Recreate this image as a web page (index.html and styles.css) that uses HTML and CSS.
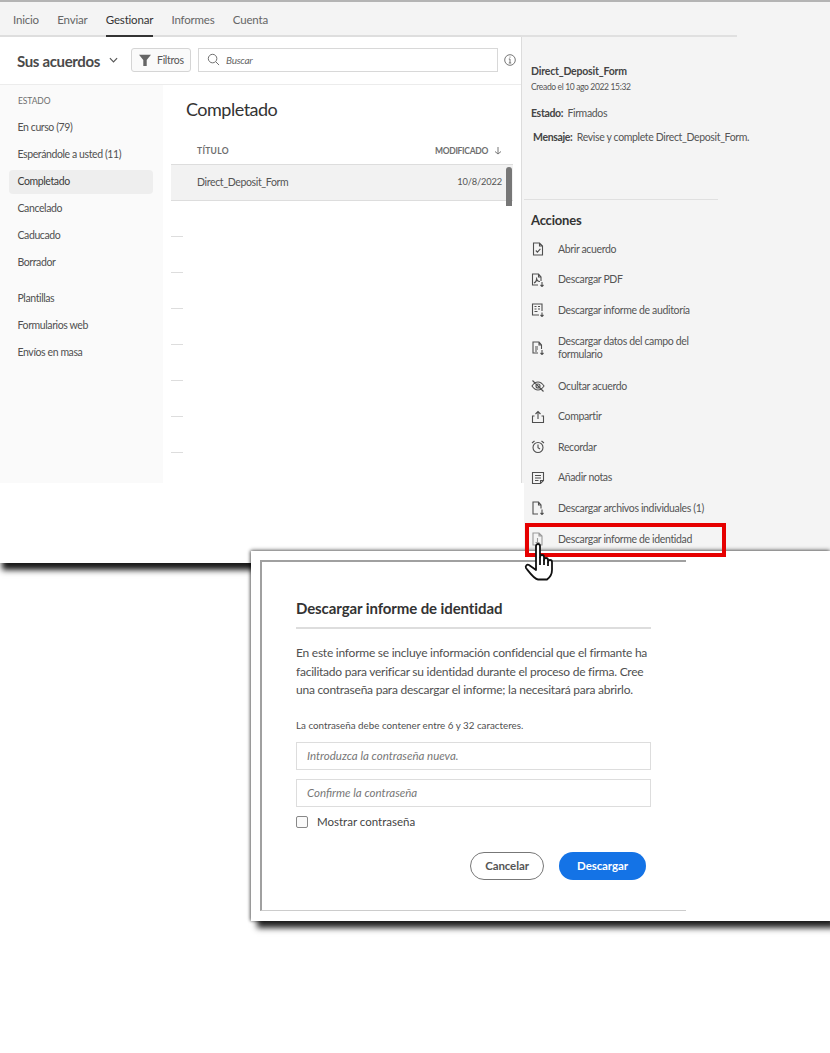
FILE: index.html
```html
<!DOCTYPE html>
<html lang="es">
<head>
<meta charset="utf-8">
<title>Descargar informe de identidad</title>
<link rel="stylesheet" href="styles.css">
</head>
<body>
<div class="canvas">
  <div class="window">
    <div class="left">
      <nav class="tabs">
        <a>Inicio</a><a>Enviar</a><a class="on">Gestionar</a><a>Informes</a><a>Cuenta</a>
      </nav>
      <div class="toolbar">
        <h1 class="agreements">Sus acuerdos</h1>
        <svg class="chev" viewBox="0 0 10 6"><path d="M1 1l4 4 4-4"/></svg>
        <button class="filter"><svg viewBox="0 0 14 14"><path d="M0 1h14L9 7v7H5V7z"/></svg>Filtros</button>
        <div class="search">
          <svg viewBox="0 0 14 14"><circle cx="6" cy="6" r="4.6"/><path d="M9.5 9.5L13 13"/></svg>
          <span>Buscar</span>
        </div>
        <svg class="info" viewBox="0 0 12 12"><circle cx="6" cy="6" r="5.3"/><path d="M6 5v4M4.8 9h2.4M4.8 5H6M6 2.6v1"/></svg>
      </div>
      <div class="body">
        <aside class="side">
          <div class="side-head">ESTADO</div>
          <a>En curso (79)</a>
          <a>Esperándole a usted (11)</a>
          <a class="sel">Completado</a>
          <a>Cancelado</a>
          <a>Caducado</a>
          <a>Borrador</a>
          <div class="side-gap"></div>
          <a>Plantillas</a>
          <a>Formularios web</a>
          <a>Envíos en masa</a>
        </aside>
        <main class="content">
          <h2>Completado</h2>
          <div class="thead"><span>TÍTULO</span><span class="mod">MODIFICADO<svg viewBox="0 0 8 8"><path d="M4 0v7M1 4.5L4 7l3-2.5"/></svg></span></div>
          <div class="row"><span class="row-name">Direct_Deposit_Form</span><span class="row-date">10/8/2022</span><i class="thumb"></i></div>
          <div class="dashes"><i></i><i></i><i></i><i></i><i></i><i></i><i></i></div>
        </main>
      </div>
    </div>
    <section class="panel">
      <div class="panel-rule"></div>
      <div class="doc-name">Direct_Deposit_Form</div>
      <div class="doc-date">Creado el 10 ago 2022 15:32</div>
      <div class="meta"><b>Estado:</b> Firmados</div>
      <div class="meta msg"><b>Mensaje:</b> Revise y complete Direct_Deposit_Form.</div>
      <div class="panel-sep"></div>
      <h3>Acciones</h3>
      <ul class="actions">
        <li><svg viewBox="0 0 14 14"><path d="M2.5 1h6l3 3v9h-9zM8.5 1v3h3M4.8 8.5l1.600 1.600 3-3.200"/></svg>Abrir acuerdo</li>
        <li><svg viewBox="0 0 14 14"><path d="M10 8V4L7.500 1H1.500v11H7M7.500 1v3H10M3 10c2-1 3-3 2.500-5.500C5.500 7 7 8.500 9 8.500M11 9v4.500M9.500 12l1.500 1.500 1.500-1.500"/></svg>Descargar PDF</li>
        <li><svg viewBox="0 0 14 14"><path d="M11 8V1H1.500v11H8M3.500 3.500h2M7 3.500h2M3.500 6h2M7 6h2M3.500 8.500h3M11 9.500v4M9.500 12l1.500 1.500 1.500-1.500"/></svg>Descargar informe de auditoría</li>
        <li class="tall"><svg viewBox="0 0 14 14"><path d="M10.500 8V4L8 1H2v11h5M8 1v3h2.500M4 6h3M4 8h3M4 10h2M11 9v4.500M9.500 12l1.500 1.500 1.500-1.500"/></svg><span>Descargar datos del campo del formulario</span></li>
        <li><svg viewBox="0 0 14 14"><path d="M1 7c2-3 4-4 6-4s4 1 6 4c-2 3-4 4-6 4s-4-1-6-4zM1.500 1.500l11 11"/><circle cx="7" cy="7" r="2"/></svg>Ocultar acuerdo</li>
        <li><svg viewBox="0 0 14 14"><path d="M3.500 6H1.500v6.500h11V6h-2M7 9V1.500M4.500 4L7 1.500 9.500 4"/></svg>Compartir</li>
        <li><svg viewBox="0 0 14 14"><circle cx="7" cy="7.500" r="5"/><path d="M7 4.500v3.200l2 1.300M1 3l2.500-2M13 3l-2.500-2"/></svg>Recordar</li>
        <li><svg viewBox="0 0 14 14"><path d="M1.500 1.500h11v8l-3 3h-8zM4 4.500h6M4 7h6M4 9.500h3.500M12.500 9.500h-3v3"/></svg>Añadir notas</li>
        <li><svg viewBox="0 0 14 14"><path d="M10 7.500V4L7.500 1H2v12h5M7.500 1v3H10M11 8.500v5M9.500 12l1.500 1.500 1.500-1.500"/></svg>Descargar archivos individuales (1)</li>
        <li class="flagged">
          <svg class="faint" viewBox="0 0 14 14"><path d="M2 1h6l3 3v9H2zM8 1v3h3M4.500 10.500h4M6.500 6v4.500"/></svg>Descargar informe de identidad
          <i class="redbox"></i>
          <svg class="hand" viewBox="0 0 30 38"><path d="M12 3a2 2 0 0 1 4 0v11a2 2 0 0 1 4 0v3a2 2 0 0 1 4 0v2a2 2 0 0 1 4 0v8c0 5-3 8-5 9.500H14C10 36 6 30 2 25c-1-2 1-4 3-3l7 5z"/><path d="M16 14v8M20 17v5M24 19v4"/></svg>
        </li>
      </ul>
    </section>
  </div>

  <div class="dialog">
    <div class="frame">
      <h2>Descargar informe de identidad</h2>
      <p class="lead">En este informe se incluye información confidencial que el firmante ha facilitado para verificar su identidad durante el proceso de firma. Cree una contraseña para descargar el informe; la necesitará para abrirlo.</p>
      <p class="note">La contraseña debe contener entre 6 y 32 caracteres.</p>
      <div class="field">Introduzca la contraseña nueva.</div>
      <div class="field">Confirme la contraseña</div>
      <label class="check"><i></i>Mostrar contraseña</label>
      <div class="buttons">
        <button class="cancel">Cancelar</button>
        <button class="go">Descargar</button>
      </div>
    </div>
  </div>
</div>
</body>
</html>
```

FILE: styles.css
```css
* { box-sizing: border-box; }
html, body { margin: 0; padding: 0; background: #fff; }
body { font-family: "Lato", "Open Sans", sans-serif; color: #4b4b4b; }
h1, h2, h3, p, ul { margin: 0; padding: 0; }
.canvas { position: relative; width: 830px; height: 1053px; overflow: hidden; background: #fff; }

.window { display: flex; width: 830px; height: 563px; background: #fff; border-top: 2px solid #b4b4b4; box-shadow: 2px 7px 6px rgba(0,0,0,.9); }

.left { width: 521px; display: flex; flex-direction: column; height: 100%; }
.tabs { display: flex; gap: 18.400px; height: 35px; padding-left: 13px; background: #f4f4f4; border-bottom: 2px solid #dedede; font-size: 11.500px; letter-spacing: -.2px; }
.tabs a { height: 35px; line-height: 36px; color: #666; }
.tabs .on { color: #333; border-bottom: 2px solid #333; }

.toolbar { display: flex; align-items: center; height: 48px; padding: 0 0 2px 17px; border-bottom: 1px solid #ececec; }
.agreements { font-size: 15px; font-weight: 700; color: #4a4a4a; letter-spacing: -.35px; margin-top: 2px; }
.chev { width: 9px; height: 6px; margin-left: 9px; fill: none; stroke: #555; stroke-width: 1.300; }
.filter { display: flex; align-items: center; gap: 6px; width: 60px; height: 24px; margin-left: 13px; padding: 0 0 0 7px; background: #fafafa; border: 1px solid #d5d5d5; border-radius: 3px; font: 10.500px "Lato", sans-serif; letter-spacing: -.3px; color: #555; }
.filter svg { width: 12px; height: 12px; fill: #666; }
.search { display: flex; align-items: center; gap: 6px; width: 300px; height: 24px; margin-left: 7px; padding-left: 8px; border: 1px solid #d8d8d8; font-size: 10px; font-style: italic; letter-spacing: -.3px; color: #666; }
.search svg { width: 13px; height: 13px; fill: none; stroke: #666; stroke-width: 1; }
.info { width: 12px; height: 12px; margin-left: 6px; fill: none; stroke: #666; stroke-width: .9; }

.body { flex: 1; display: flex; }
.side { width: 163px; height: 398px; padding: 0 10px 0 9px; background: #fafafa; display: flex; flex-direction: column; }
.side-head { height: 30px; padding: 10px 0 0 9px; font-size: 8.500px; line-height: 12px; letter-spacing: -.1px; color: #6e6e6e; }
.side a { display: block; height: 27px; line-height: 24px; padding-left: 8.500px; font-size: 10.500px; letter-spacing: -.4px; color: #505050; }
.side .sel { height: 24px; margin: 1px 0 2px; line-height: 22px; background: #eee; border-radius: 4px; color: #3c3c3c; }
.side-gap { height: 9px; }

.content { flex: 1; padding-left: 8px; }
.content h2 { height: 53px; padding: 12px 0 0 15px; font-size: 18px; line-height: 24px; font-weight: 400; letter-spacing: -.5px; color: #333; }
.thead { display: flex; justify-content: space-between; align-items: center; width: 342px; height: 26px; padding: 0 11px 0 26px; font-size: 8.500px; font-weight: 700; letter-spacing: .3px; color: #6e6e6e; }
.mod { display: flex; align-items: center; gap: 6px; letter-spacing: -.3px; }
.mod svg { width: 8px; height: 8px; fill: none; stroke: #777; stroke-width: 1; }
.row { position: relative; display: flex; justify-content: space-between; align-items: center; width: 342px; height: 37px; padding: 0 11px 2px 26px; background: #f2f2f2; border-top: 1px solid #ddd; border-bottom: 1px solid #ddd; font-size: 10.500px; color: #555; }
.row-name { letter-spacing: -.35px; }
.row-date { font-size: 9.300px; letter-spacing: -.15px; }
.thumb { position: absolute; top: 2px; right: 1px; width: 6px; height: 39px; border-radius: 3px 3px 0 0; background: #777; }
.dashes { display: flex; flex-direction: column; gap: 35px; padding-top: 35px; }
.dashes i { display: block; width: 12px; height: 1px; background: #ddd; }

.panel { position: relative; width: 309px; height: 100%; padding-left: 10px; background: #f4f4f4; }
.panel::before { content: ""; position: absolute; left: 0; top: 35px; height: 446px; width: 1px; background: #dcdcdc; }
.panel::after { content: ""; position: absolute; left: 0; top: 481px; bottom: 0; width: 3px; background: #fff; }
.panel-rule { width: 216px; height: 35px; margin-left: -10px; border-bottom: 2px solid #e0e0e0; }
.doc-name { margin-top: 27px; font-size: 10.500px; line-height: 14px; font-weight: 700; letter-spacing: -.2px; color: #444; }
.doc-date { margin-top: 3px; font-size: 8.500px; line-height: 12px; letter-spacing: -.35px; color: #555; }
.meta { margin-top: 13px; font-size: 10.500px; line-height: 14px; letter-spacing: -.35px; color: #555; }
.meta b { margin-right: 2px; color: #444; }
.msg { margin: 10px 0 0 2px; }
.panel-sep { width: 194px; height: 1px; margin: 55px 0 0 -7px; background: #e0e0e0; }
.panel h3 { margin-top: 13px; font-size: 13px; line-height: 14px; font-weight: 700; letter-spacing: -.2px; color: #333; }
.actions { list-style: none; margin-top: 7px; width: 199px; }
.actions li { display: flex; align-items: center; min-height: 30.600px; font-size: 10.500px; line-height: 13px; letter-spacing: -.35px; color: #555; white-space: nowrap; }
.actions li.tall { min-height: 45px; white-space: normal; }
.actions li > svg:first-child { flex: none; width: 14px; height: 14px; margin-right: 13px; fill: none; stroke: #4f4f4f; stroke-width: 1.100; }
.actions li > svg.faint { stroke: #999; }
.flagged { position: relative; }
.redbox { position: absolute; left: -6px; top: -1px; width: 201px; height: 34px; border: 4px solid #e60000; z-index: 2; }
.hand { position: absolute; left: -7px; top: 19px; width: 30px; height: 38px; fill: #fff; stroke: #111; stroke-width: 1.800; stroke-linejoin: round; z-index: 3; }

.dialog { position: absolute; z-index: 1; left: 251px; top: 551px; width: 579px; height: 370px; padding: 9px; background: #fff; box-shadow: 0 -1px 4px rgba(0,0,0,.45), 6px 7px 6px rgba(0,0,0,.85), -1px 0 3px rgba(0,0,0,.4); }
.frame { width: 426px; height: 351px; padding: 36px 35px 0 34px; border-top: 2px solid #a0a0a0; border-left: 2px solid #a0a0a0; border-bottom: 1px solid #ccc; }
.frame h2 { height: 31px; padding-bottom: 10px; font-size: 15px; line-height: 20px; font-weight: 700; letter-spacing: -.1px; color: #333; border-bottom: 2px solid #ddd; }
.lead { margin-top: 15px; font-size: 12px; line-height: 18.500px; letter-spacing: -.24px; color: #505050; }
.note { margin-top: 19px; font-size: 9.800px; line-height: 13px; color: #505050; }
.field { height: 28px; margin-top: 10px; padding-left: 10px; border: 1px solid #ddd; font-size: 11.500px; line-height: 26px; font-style: italic; color: #777; }
.field + .field { margin-top: 9px; }
.check { display: flex; align-items: center; gap: 9px; margin-top: 8px; font-size: 11.500px; line-height: 14px; color: #444; }
.check i { width: 12px; height: 12px; border: 1px solid #888; border-radius: 2px; background: #fafafa; }
.buttons { display: flex; justify-content: flex-end; gap: 15px; margin: 23px 5px 0 0; }
.buttons button { height: 28px; border-radius: 14px; font: 700 11.500px "Lato", sans-serif; letter-spacing: -.1px; padding: 0; }
.cancel { width: 74px; background: #fff; border: 1px solid #777; color: #555; }
.go { width: 87px; background: #1473e6; border: 0; color: #fff; }
```
